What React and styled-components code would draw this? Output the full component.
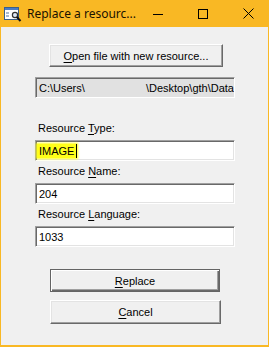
import React from "react";
import styled, { createGlobalStyle } from "styled-components";

const GlobalStyle = createGlobalStyle`
  html, body {
    margin: 0;
    padding: 0;
    background: #f0f0f0;
  }
  body {
    font-family: "Liberation Sans", Arial, sans-serif;
    font-size: 11px;
    color: #000;
  }
`;

const Frame = styled.div`
  width: 269px;
  height: 347px;
  box-sizing: border-box;
  border: 1px solid #f9b824;
  border-top: none;
  border-bottom: 2px solid #f9b824;
  display: flex;
  flex-direction: column;
  background: #f0f0f0;
`;

const TitleBar = styled.div`
  height: 27px;
  margin: 0 -1px;
  background: #f9b824;
  display: flex;
  align-items: center;
  flex-shrink: 0;
`;

const TitleText = styled.span`
  font-family: "Noto Sans", "Liberation Sans", sans-serif;
  font-size: 12px;
  color: #1a1200;
  margin-left: 5px;
  flex: 1;
  white-space: nowrap;
`;

const Caption = styled.div`
  width: 45px;
  height: 27px;
  flex-shrink: 0;
  display: flex;
  align-items: center;
  justify-content: center;
`;

const Body = styled.div`
  flex: 1;
  display: flex;
  flex-direction: column;
  padding: 17px 0 0 34px;
`;

const Button = styled.div`
  box-sizing: border-box;
  width: ${(p) => p.$w}px;
  height: ${(p) => p.$h}px;
  margin-left: ${(p) => p.$left}px;
  background: #f0f0f0;
  display: flex;
  align-items: center;
  justify-content: center;
  border: 1px solid;
  border-color: #ffffff #696969 #696969 #ffffff;
  box-shadow: inset -1px -1px 0 #a0a0a0, inset 1px 1px 0 #e3e3e3;
  ${(p) =>
    p.$default &&
    `
    border-color: #646464;
    box-shadow: inset 1px 1px 0 #ffffff, inset -1px -1px 0 #696969, inset -2px -2px 0 #a0a0a0;
  `}
  u {
    text-decoration: underline;
    text-underline-offset: 2px;
  }
`;

const PathBox = styled.div`
  box-sizing: border-box;
  width: 200px;
  height: 21px;
  margin-top: 10px;
  background: #e1e1e1;
  border: 1px solid;
  border-color: #a0a0a0 #ffffff #ffffff #a0a0a0;
  box-shadow: inset 1px 1px 0 #696969;
  display: flex;
  align-items: center;
  justify-content: space-between;
  padding: 0 0 0 3px;
  white-space: nowrap;
  overflow: hidden;
`;

const Label = styled.div`
  margin: ${(p) => p.$top}px 0 0 3px;
  line-height: 13px;
  u {
    text-underline-offset: 2px;
  }
`;

const Field = styled.div`
  box-sizing: border-box;
  width: 200px;
  height: 21px;
  margin-top: 5px;
  background: #fff;
  border: 1px solid;
  border-color: #a0a0a0 #ffffff #ffffff #a0a0a0;
  box-shadow: inset 1px 1px 0 #696969, inset -1px -1px 0 #e3e3e3;
  display: flex;
  align-items: center;
  padding-left: 3px;
`;

const Marker = styled.span`
  background: #ffff1a;
  box-shadow: 0 0 2px 1px #ffff1a;
  padding: 1px 2px 1px 2px;
  margin-left: -2px;
  border-right: 1px solid #000;
`;

const Spacer = styled.div`
  height: ${(p) => p.$h}px;
  flex-shrink: 0;
`;

const AppIcon = () => (
  <svg width="18" height="16" viewBox="0 0 18 16" style={{ marginLeft: 4, flexShrink: 0 }}>
    <rect x="0.5" y="1.5" width="14" height="12" fill="#fff" stroke="#3a5f8a" />
    <rect x="1" y="2" width="13" height="2" fill="#4a7cc4" />
    <rect x="2" y="6" width="3" height="2" fill="#a8b8d0" />
    <rect x="2" y="9" width="3" height="2" fill="#a8b8d0" />
    <circle cx="11" cy="9" r="2.6" fill="#dfe9f5" stroke="#333" strokeWidth="1.2" />
    <line x1="12.8" y1="11" x2="16.5" y2="15" stroke="#111" strokeWidth="2" />
  </svg>
);

export default function App() {
  return (
    <>
      <GlobalStyle />
      <Frame>
        <TitleBar>
          <AppIcon />
          <TitleText>Replace a resourc...</TitleText>
          <Caption>
            <svg width="10" height="10" viewBox="0 0 10 10">
              <line x1="0" y1="5.5" x2="10" y2="5.5" stroke="#000" />
            </svg>
          </Caption>
          <Caption>
            <svg width="10" height="10" viewBox="0 0 10 10">
              <rect x="0.5" y="0.5" width="9" height="9" fill="none" stroke="#000" />
            </svg>
          </Caption>
          <Caption>
            <svg width="11" height="11" viewBox="0 0 11 11">
              <path d="M0.5 0.5 L10.5 10.5 M10.5 0.5 L0.5 10.5" stroke="#000" />
            </svg>
          </Caption>
        </TitleBar>
        <Body>
          <Button $w={174} $h={23} $left={14}>
            <span>
              <u>O</u>pen file with new resource...
            </span>
          </Button>
          <PathBox>
            <span>C:\Users\</span>
            <span>\Desktop\gth\Data</span>
          </PathBox>
          <Label $top={24}>
            Resource <u>T</u>ype:
          </Label>
          <Field>
            <Marker>IMAGE</Marker>
          </Field>
          <Label $top={4}>
            Resource <u>N</u>ame:
          </Label>
          <Field>204</Field>
          <Label $top={4}>
            Resource <u>L</u>anguage:
          </Label>
          <Field>1033</Field>
          <Spacer $h={22} />
          <Button $w={170} $h={23} $left={15} $default>
            <span>
              <u>R</u>eplace
            </span>
          </Button>
          <Spacer $h={8} />
          <Button $w={171} $h={24} $left={15}>
            <span>
              <u>C</u>ancel
            </span>
          </Button>
        </Body>
      </Frame>
    </>
  );
}
